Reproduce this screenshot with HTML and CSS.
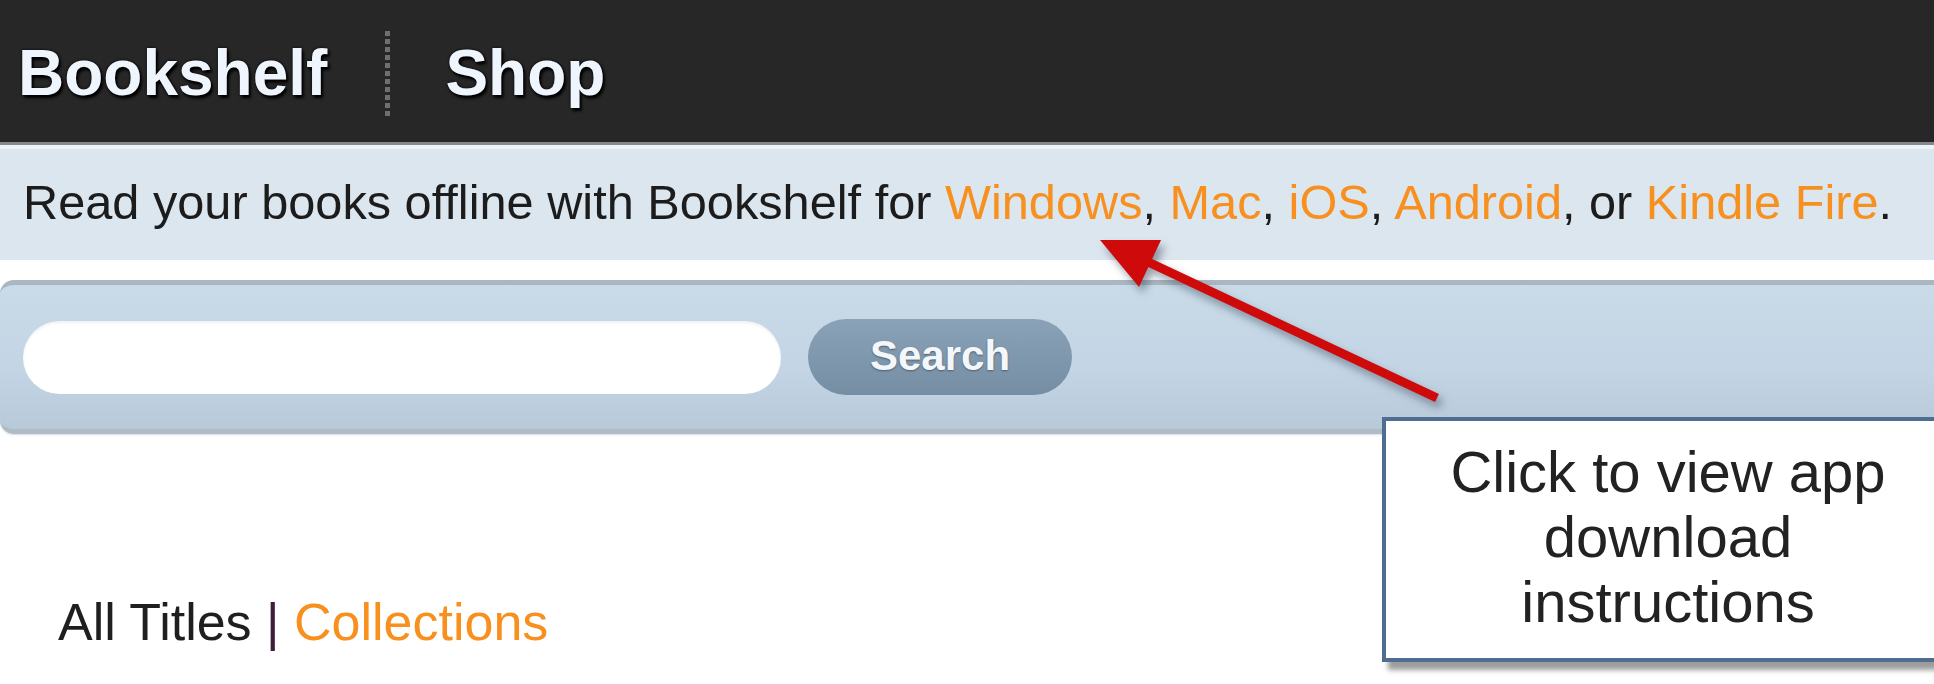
FILE: index.html
```html
<!DOCTYPE html>
<html lang="en">
<head>
<meta charset="utf-8">
<title>Bookshelf</title>
<link rel="stylesheet" href="styles.css">
</head>
<body>
<div class="page">
  <header class="topbar">
    <a class="brand" href="#">Bookshelf</a>
    <span class="sep"></span>
    <a class="brand" href="#">Shop</a>
  </header>
  <div class="notice">
    <p class="notice-text">Read your books offline with Bookshelf for <a href="#">Windows</a>, <a href="#">Mac</a>, <a href="#">iOS</a>, <a href="#">Android</a>, or <a href="#">Kindle Fire</a>.</p>
  </div>
  <div class="searchbar">
    <input class="search-input" type="text" aria-label="Search">
    <button class="search-btn" type="button">Search</button>
  </div>
  <nav class="tabs">All Titles <span class="pipe">|</span> <a href="#">Collections</a></nav>

  <svg class="annotation-arrow" width="1934" height="684" viewBox="0 0 1934 684" aria-hidden="true">
    <line x1="1437" y1="398" x2="1146" y2="261" stroke="#cf0a0a" stroke-width="9"/>
    <polygon points="1100,240 1161,240 1139,287" fill="#cf0a0a"/>
  </svg>
  <div class="callout">Click to view app<br>download<br>instructions</div>
</div>
</body>
</html>
```

FILE: styles.css
```css
html, body {
  margin: 0;
  padding: 0;
  background: #ffffff;
}

body {
  font-family: "Liberation Sans", Arial, sans-serif;
  color: #1f1f1f;
}

.page {
  position: relative;
  width: 100%;
  height: 684px;
  overflow: hidden;
}

/* top dark bar */
.topbar {
  height: 145px;
  box-sizing: border-box;
  padding: 4px 0 0 18px;
  background: #272727;
  border-bottom: 3px solid #85898e;
  display: flex;
  align-items: center;
}

.brand {
  font-size: 64px;
  font-weight: bold;
  color: #eef5fc;
  text-decoration: none;
  text-shadow: 0 0 3px #000, 2px 3px 3px #000;
}

.sep {
  width: 5px;
  height: 85px;
  margin: 0 55px 0 58px;
  background: repeating-linear-gradient(to bottom, #6f6f6f 0, #6f6f6f 5px, transparent 5px, transparent 8px);
}

/* offline notice */
.notice {
  border-top: 4px solid #eef3f8;
  background: #dce6ef;
  padding: 25px 0 30px 23px;
  margin-bottom: 20px;
}

.notice-text {
  margin: 0;
  font-size: 48.7px;
  line-height: 56px;
  color: #1c1c1c;
  white-space: nowrap;
}

.notice-text a,
.tabs a {
  color: #f7901e;
  text-decoration: none;
}

/* search band */
.searchbar {
  height: 144px;
  border-top: 5px solid #aab6c1;
  border-bottom: 5px solid #afbcc8;
  border-radius: 14px 0 0 14px;
  background: linear-gradient(to bottom, #c9dbe8 0%, #c3d5e5 60%, #b8c9d9 100%);
  display: flex;
  align-items: center;
  padding-left: 23px;
  box-shadow: 0 1px 2px rgba(120, 140, 160, 0.3);
}

.search-input {
  width: 758px;
  height: 73px;
  box-sizing: border-box;
  border: none;
  border-radius: 37px;
  background: #ffffff;
  box-shadow: inset 0 2px 3px rgba(0, 0, 0, 0.06);
  outline: none;
  margin: 0;
}

.search-btn {
  width: 264px;
  height: 76px;
  margin-left: 27px;
  border: none;
  border-radius: 38px;
  background: linear-gradient(to bottom, #8aa2b7, #768ea3);
  color: #f3f7fb;
  font-family: "Liberation Sans", Arial, sans-serif;
  font-size: 42px;
  font-weight: bold;
  text-shadow: 0 1px 2px rgba(40, 50, 60, 0.55);
  padding: 0;
  padding-bottom: 2px;
}

/* tabs */
.tabs {
  margin-top: 158px;
  padding-left: 58px;
  font-size: 52px;
  color: #1f1f1f;
}

.pipe {
  color: #3d1f3a;
}

/* annotation overlay */
.annotation-arrow {
  position: absolute;
  top: 0;
  left: 0;
  pointer-events: none;
  filter: drop-shadow(4px 6px 4px rgba(70, 80, 100, 0.55));
}

.callout {
  position: absolute;
  left: 1382px;
  top: 417px;
  width: 572px;
  height: 245px;
  box-sizing: border-box;
  border: 4px solid #4f6d90;
  background: #ffffff;
  box-shadow: 6px 8px 5px rgba(90, 90, 90, 0.6);
  padding-top: 18px;
  text-align: center;
  font-size: 58px;
  line-height: 65px;
  color: #222222;
}
```
